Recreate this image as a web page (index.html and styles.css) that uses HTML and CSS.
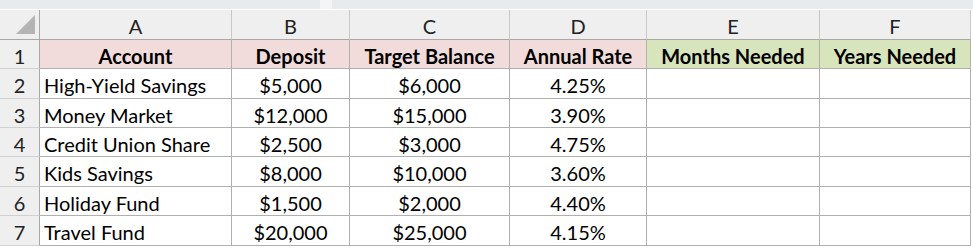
FILE: index.html
```html
<!DOCTYPE html>
<html>
<head>
<meta charset="utf-8">
<link rel="stylesheet" href="styles.css">
</head>
<body>
<div class="topbar"><div class="seg seg1"></div><div class="gap"></div><div class="seg seg2"></div></div>
<div class="sheet">
  <div class="hd corner"><span class="tri"></span></div>
  <div class="hd col">A</div><div class="hd col">B</div><div class="hd col">C</div><div class="hd col">D</div><div class="hd col">E</div><div class="hd col">F</div>

  <div class="hd rn">1</div>
  <div class="c th pink">Account</div><div class="c th pink">Deposit</div><div class="c th pink">Target Balance</div><div class="c th pink">Annual Rate</div><div class="c th green">Months Needed</div><div class="c th green">Years Needed</div>

  <div class="hd rn">2</div>
  <div class="c l">High-Yield Savings</div><div class="c">$5,000</div><div class="c">$6,000</div><div class="c">4.25%</div><div class="c"></div><div class="c"></div>

  <div class="hd rn">3</div>
  <div class="c l">Money Market</div><div class="c">$12,000</div><div class="c">$15,000</div><div class="c">3.90%</div><div class="c"></div><div class="c"></div>

  <div class="hd rn">4</div>
  <div class="c l">Credit Union Share</div><div class="c">$2,500</div><div class="c">$3,000</div><div class="c">4.75%</div><div class="c"></div><div class="c"></div>

  <div class="hd rn">5</div>
  <div class="c l">Kids Savings</div><div class="c">$8,000</div><div class="c">$10,000</div><div class="c">3.60%</div><div class="c"></div><div class="c"></div>

  <div class="hd rn">6</div>
  <div class="c l">Holiday Fund</div><div class="c">$1,500</div><div class="c">$2,000</div><div class="c">4.40%</div><div class="c"></div><div class="c"></div>

  <div class="hd rn">7</div>
  <div class="c l">Travel Fund</div><div class="c">$20,000</div><div class="c">$25,000</div><div class="c">4.15%</div><div class="c"></div><div class="c"></div>
</div>
</body>
</html>
```

FILE: styles.css
```css
html, body {
  margin: 0;
  padding: 0;
  background: #ffffff;
}
body {
  font-family: Lato, "Open Sans", sans-serif;
  font-size: 20px;
  color: #000;
  width: 973px;
  height: 248px;
  overflow: hidden;
}
.topbar {
  height: 10px;
  display: flex;
  background: #ffffff;
}
.seg {
  height: 9px;
  background: #e8ebee;
}
.seg1 { width: 320px; }
.gap { width: 12px; background: #f4f5f7; height: 9px; }
.seg2 { flex: 1; }

.sheet {
  display: grid;
  grid-template-columns: 40px 192px 118px 160px 137px 173px 151px;
  grid-template-rows: 30px 29px 30px 29px 29px 30px 29px 30px;
}
.hd {
  background: #efefef;
  color: #222;
  display: flex;
  align-items: center;
  justify-content: center;
  box-sizing: border-box;
  border-right: 1px solid #c8c8c8;
  border-bottom: 1px solid #c8c8c8;
  font-size: 20px;
}
.col {
  border-bottom: 1px solid #a8a8a8;
  padding-top: 2px;
}
.corner {
  position: relative;
  border-right: 1px solid #a8a8a8;
  border-bottom: 1px solid #a8a8a8;
}
.tri {
  position: absolute;
  right: 4px;
  bottom: 5px;
  width: 0;
  height: 0;
  border-left: 19px solid transparent;
  border-bottom: 19px solid #b4b4b4;
}
.rn {
  border-right: 1px solid #a8a8a8;
  border-bottom: 1px solid #d0d0d0;
  padding-top: 3px;
}
.c {
  box-sizing: border-box;
  border-right: 1px solid #b0b0b0;
  border-bottom: 1px solid #b0b0b0;
  display: flex;
  align-items: center;
  justify-content: center;
  padding-top: 3px;
  white-space: nowrap;
  overflow: hidden;
}
.c.l {
  justify-content: flex-start;
  padding-left: 4px;
}
.th {
  font-weight: bold;
}
.pink { background: #f2dcdb; }
.green { background: #d8e4bc; }
```
